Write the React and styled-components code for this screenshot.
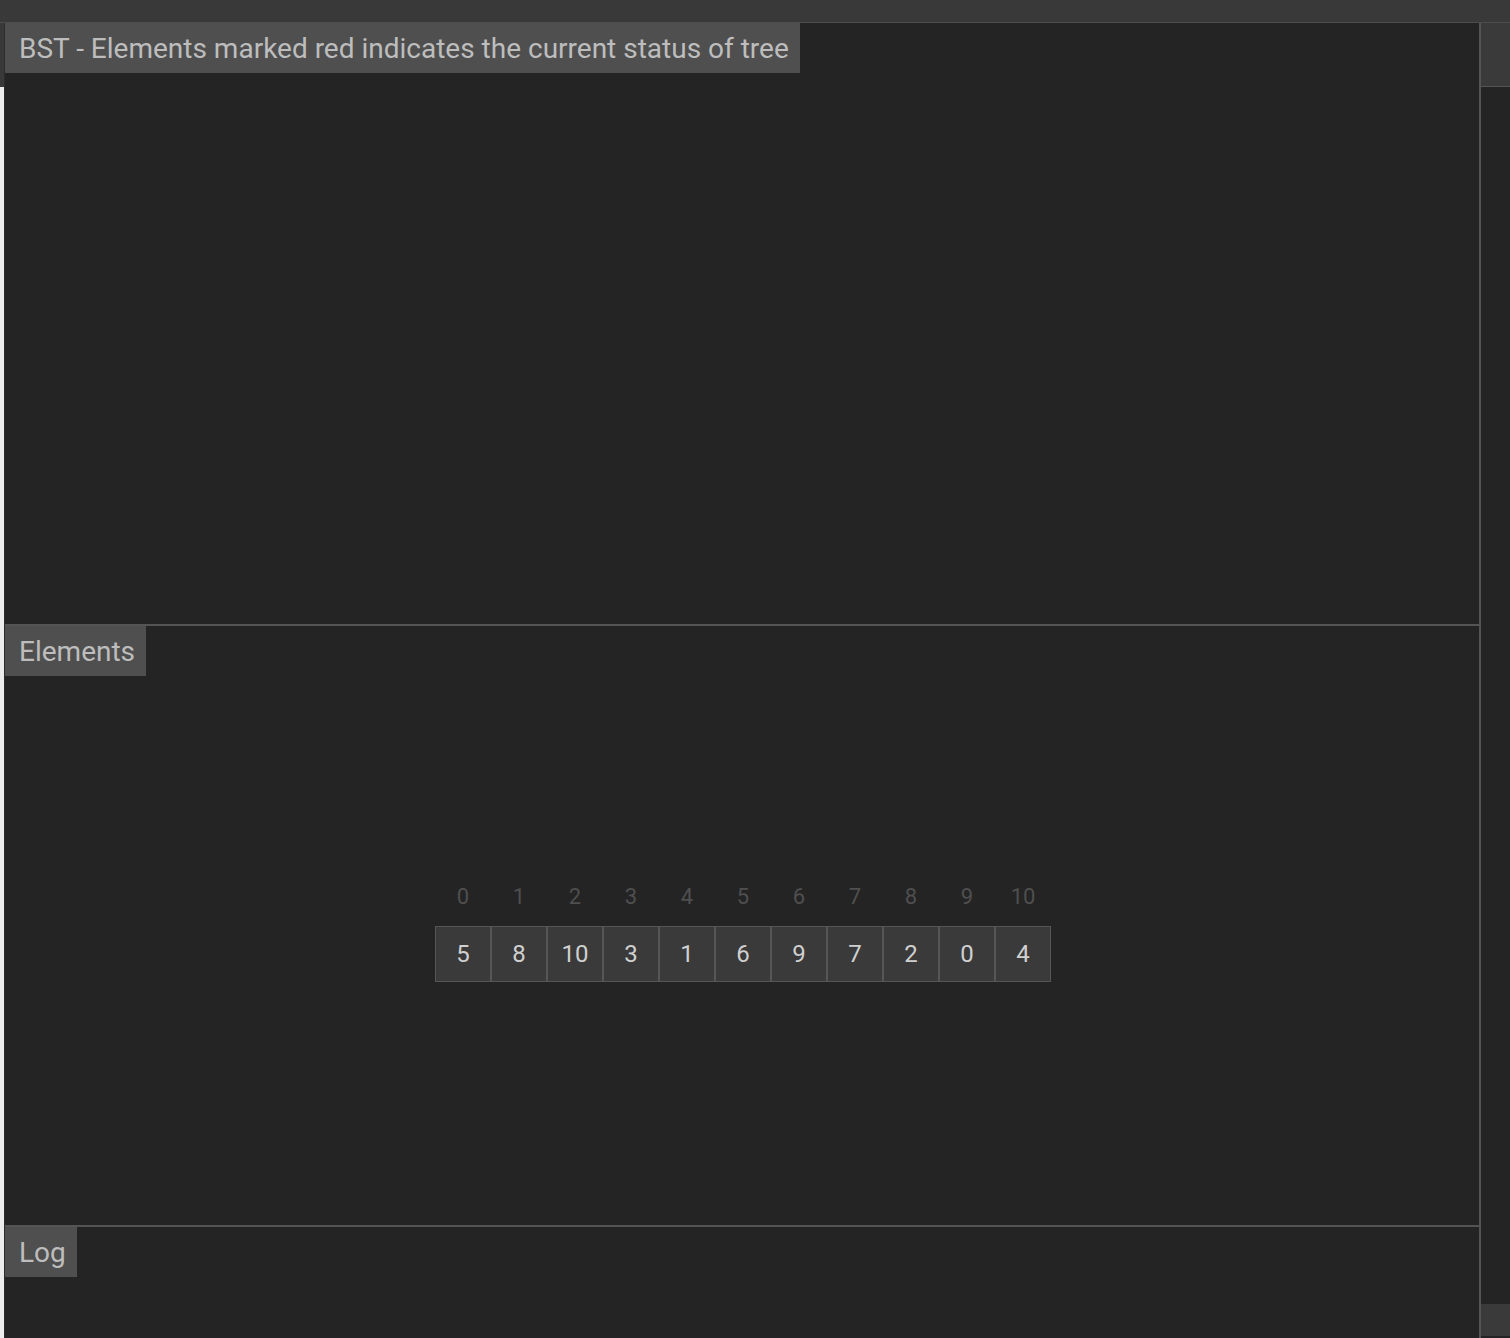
import React from "react"
import styled, { createGlobalStyle } from "styled-components"

const GlobalStyle = createGlobalStyle`
    html, body {
        margin: 0;
        padding: 0;
        background: #242424;
        font-family: Roboto, "Noto Sans", "Liberation Sans", sans-serif;
    }
    #root {
        height: 1338px;
        overflow: hidden;
    }
`;

const Page = styled.div`
    display: flex;
    flex-direction: column;
    height: 1338px;
`;

const TopBar = styled.div`
    height: 22px;
    background: #393939;
    border-bottom: 1px solid #4c4c4c;
    flex-shrink: 0;
`;

const Body = styled.div`
    display: flex;
    flex: 1;
    min-height: 0;
`;

const LeftStrip = styled.div`
    width: 4px;
    background: #ededed;
    border-right: 1px solid #2c2c2c;
    display: flex;
    flex-direction: column;
    .stub {
        height: 64px;
        background: #393939;
    }
`;

const MainColumn = styled.div`
    flex: 1;
    display: flex;
    flex-direction: column;
    background: #242424;
    min-width: 0;
`;

const Divider = styled.div`
    height: 2px;
    background: #545454;
    flex-shrink: 0;
`;

const VDivider = styled.div`
    width: 2px;
    background: #545454;
    flex-shrink: 0;
`;

const RightStrip = styled.div`
    width: 29px;
    display: flex;
    flex-direction: column;
    background: #242424;
    .top {
        height: 63px;
        background: #3a3a3a;
        border-bottom: 1px solid #555;
    }
    .spacer {
        flex: 1;
    }
    .bottom {
        height: 32px;
        margin-bottom: 2px;
        background: #3a3a3a;
    }
`;

const Panel = styled.div`
    height: ${p => p.h ? p.h + "px" : "auto"};
    flex: ${p => p.h ? "none" : "1"};
    display: flex;
    flex-direction: column;
    min-height: 0;
`;

const Tab = styled.div`
    align-self: flex-start;
    height: 50px;
    line-height: 51px;
    padding: 0 11px 0 14px;
    background: #4f4f4f;
    color: #bdbdbd;
    font-size: 28px;
    white-space: nowrap;
    flex-shrink: 0;
    overflow: hidden;
`;

const Content = styled.div`
    flex: 1;
    display: flex;
    flex-direction: column;
    align-items: center;
    justify-content: center;
    padding-left: 2px;
    padding-bottom: ${p => p.shift || 0}px;
`;

const ArrayGrid = styled.div`
    display: grid;
    grid-template-columns: repeat(${p => p.n}, 56px);
`;

const Index = styled.div`
    height: 30px;
    line-height: 30px;
    margin-bottom: 14px;
    text-align: center;
    color: #4f4f4f;
    font-size: 22px;
`;

const Cell = styled.div`
    height: 56px;
    box-sizing: border-box;
    border: 1px solid #565656;
    background: ${p => p.active ? "#7a2a2a" : "#3a3a3a"};
    color: #d0d0d0;
    font-size: 24px;
    display: flex;
    align-items: center;
    justify-content: center;
`;

const values = [5, 8, 10, 3, 1, 6, 9, 7, 2, 0, 4]

const App = () => {
    return (
        <Page>
            <GlobalStyle />
            <TopBar />
            <Body>
                <LeftStrip>
                    <div className="stub" />
                </LeftStrip>
                <MainColumn>
                    <Panel h={601}>
                        <Tab>BST - Elements marked red indicates the current status of tree</Tab>
                        <Content />
                    </Panel>
                    <Divider />
                    <Panel h={599}>
                        <Tab>Elements</Tab>
                        <Content shift={37}>
                            <ArrayGrid n={values.length}>
                                {values.map((v, i) => (
                                    <Index key={"i" + i}>{i}</Index>
                                ))}
                                {values.map((v, i) => (
                                    <Cell key={"c" + i}>{v}</Cell>
                                ))}
                            </ArrayGrid>
                        </Content>
                    </Panel>
                    <Divider />
                    <Panel>
                        <Tab>Log</Tab>
                        <Content />
                    </Panel>
                </MainColumn>
                <VDivider />
                <RightStrip>
                    <div className="top" />
                    <div className="spacer" />
                    <div className="bottom" />
                </RightStrip>
            </Body>
        </Page>
    )
}

export default App
